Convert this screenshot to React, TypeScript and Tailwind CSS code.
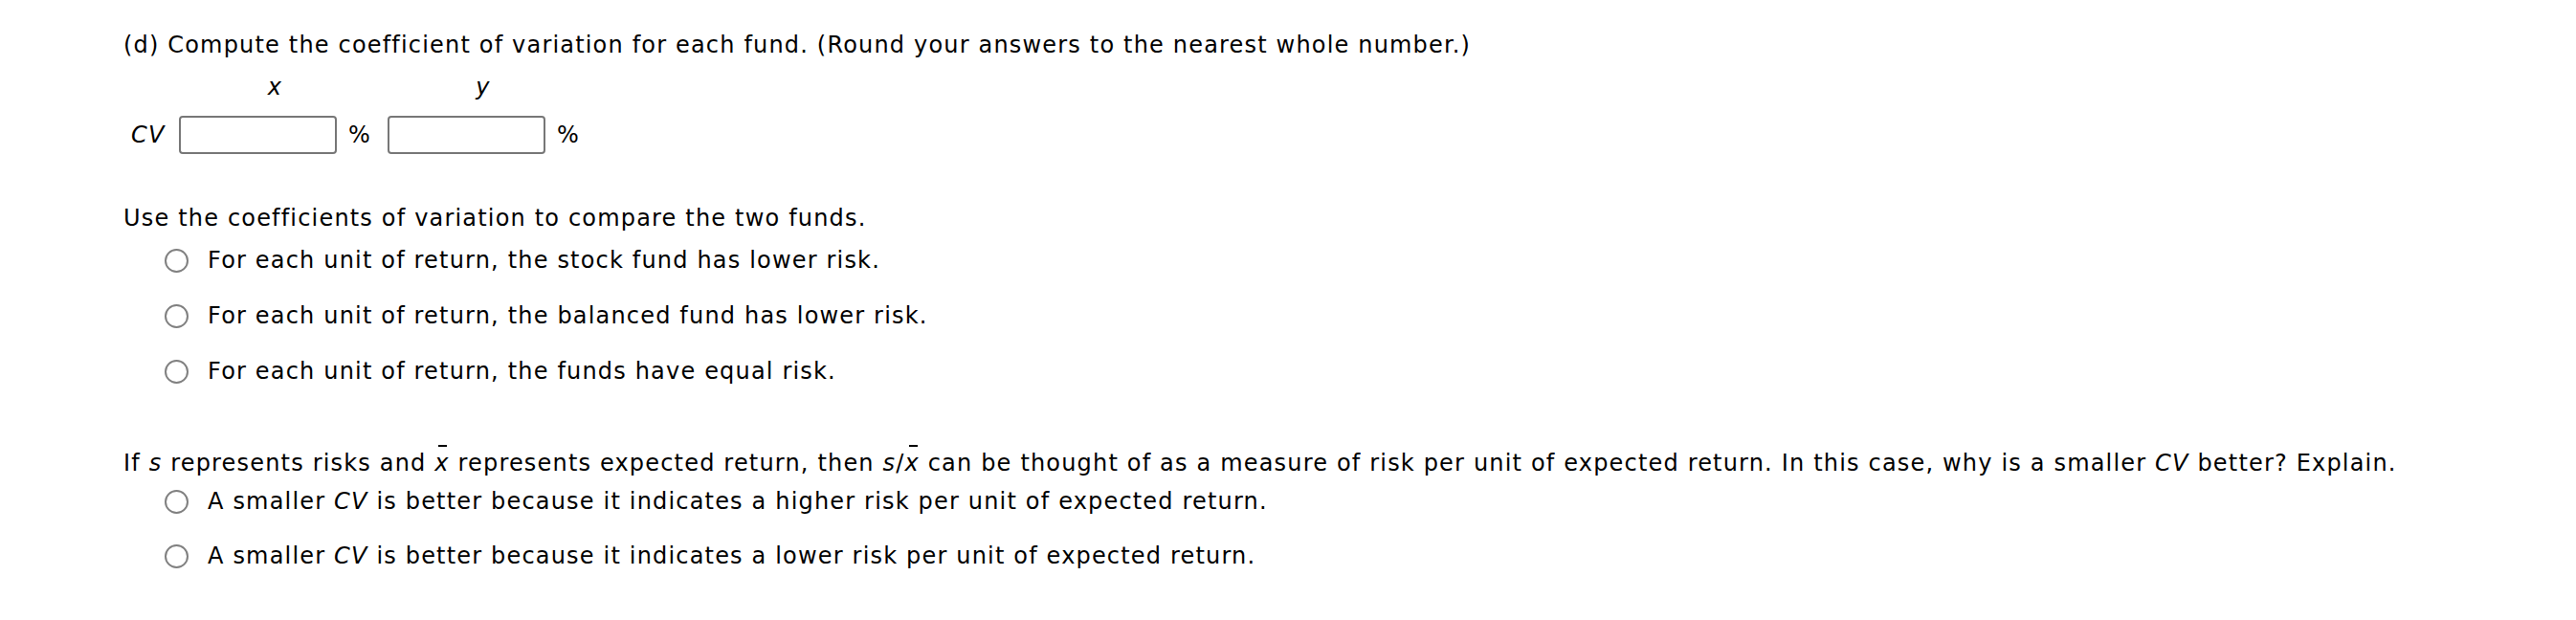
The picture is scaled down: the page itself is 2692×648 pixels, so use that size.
const Radio = ({ children }: { children: React.ReactNode }) => (
  <label className="flex items-center h-8 ml-[43px]">
    <span className="w-[25px] h-[25px] rounded-full border-2 border-[#808080] bg-white shrink-0" />
    <span className="ml-[20px]">{children}</span>
  </label>
);

const XBar = () => (
  <span className="relative inline-block italic">
    <span className="absolute left-[4px] top-[-3px] w-[9px] h-[2px] bg-black" />x
  </span>
);

const Blank = () => (
  <div className="flex items-center">
    <input
      type="text"
      className="w-[165px] h-[40px] border-2 border-[#777] rounded-[4px] bg-white"
    />
    <span className="ml-[12px]">%</span>
  </div>
);

export default function App() {
  return (
    <div className="w-[2692px] h-[648px] bg-white text-black text-[24px] leading-8 tracking-[1.18px] font-['DejaVu_Sans',sans-serif] pl-[129px] pt-[31px]">
      <p>
        (d) Compute the coefficient of variation for each fund. (Round your
        answers to the nearest whole number.)
      </p>

      <div className="mt-[12px]">
        <div className="flex h-8">
          <div className="w-[58px]" />
          <div className="w-[201px] text-center italic">x</div>
          <div className="w-[200px] ml-[17px] text-center italic">y</div>
        </div>
        <div className="flex items-center mt-[14px]">
          <div className="w-[58px] pl-[8px] italic">CV</div>
          <div className="w-[201px]">
            <Blank />
          </div>
          <div className="w-[200px] ml-[17px]">
            <Blank />
          </div>
        </div>
      </div>

      <p className="mt-[51px]">Use the coefficients of variation to compare the two funds.</p>
      <div className="flex flex-col gap-[26px] mt-[12px]">
        <Radio>For each unit of return, the stock fund has lower risk.</Radio>
        <Radio>For each unit of return, the balanced fund has lower risk.</Radio>
        <Radio>For each unit of return, the funds have equal risk.</Radio>
      </div>

      <p className="mt-[64px]">
        If <i>s</i> represents risks and <XBar /> represents expected return, then{" "}
        <i>s</i>/<XBar /> can be thought of as a measure of risk per unit of expected
        return. In this case, why is a smaller <i>CV</i> better? Explain.
      </p>
      <div className="flex flex-col gap-[25px] mt-[8px]">
        <Radio>
          A smaller <i>CV</i> is better because it indicates a higher risk per unit of
          expected return.
        </Radio>
        <Radio>
          A smaller <i>CV</i> is better because it indicates a lower risk per unit of
          expected return.
        </Radio>
      </div>
    </div>
  );
}
